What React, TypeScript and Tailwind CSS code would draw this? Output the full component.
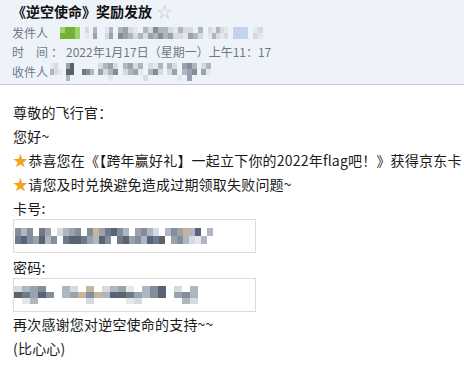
import React from "react";

// mosaic palette used for the blurred (privacy) areas
const PALETTE: Record<string, string> = {
  a: "#56637a",
  b: "#848e9b",
  c: "#adb6c1",
  d: "#c8b59e",
  e: "#6e7a89",
  f: "#d6dbe1",
  g: "#9aa2ac",
  h: "#e4e8ec",
  k: "#5e636b",
  l: "#c3d3ea",
  m: "#74b236",
  n: "#a2d16b",
};

const Mosaic: React.FC<{ rows: string[]; cell: number; rowH: number }> = ({ rows, cell, rowH }) => (
  <div className="flex flex-col">
    {rows.map((row, r) => (
      <div key={r} className="flex">
        {row.split("").map((ch, i) => (
          <span
            key={i}
            style={{ width: cell, height: rowH, background: ch === "." ? "transparent" : PALETTE[ch] }}
          />
        ))}
      </div>
    ))}
  </div>
);

const Star = () => <span className="text-[#f5a21b] text-[15px]">★</span>;

export default function App() {
  return (
    <div
      className="w-[464px] h-[370px] overflow-hidden bg-white text-[#1a1a1a]"
      style={{ fontFamily: '"Noto Sans CJK SC", "Noto Sans", sans-serif' }}
    >
      {/* mail header */}
      <header className="bg-[#eef3fa] border-b border-[#c5cad1] pl-3 h-[85px]">
        <div className="flex items-center h-[22px] whitespace-nowrap">
          <span className="text-[14px] font-bold text-[#111] leading-[20px]">《逆空使命》奖励发放</span>
          <span className="text-[15px] text-[#c4c7cc] ml-[5px] leading-[20px]">☆</span>
        </div>
        <div className="mt-[2px] flex items-center h-[18px] text-[12px] text-[#6e7886] whitespace-nowrap">
          <span className="w-[36px]">发件人</span>
          <div className="ml-[12px] flex items-center gap-[5px] blur-[0.5px]">
            <Mosaic rows={["nmmn", "mmmn"]} cell={5} rowH={6} />
            <Mosaic rows={["f.c..hc", "h.g..fg"]} cell={4} rowH={6} />
            <Mosaic rows={["cgfh.cfbccfhcff.c", "bgcfcfgcbcgffhgcf"]} cell={5} rowH={6} />
            <Mosaic rows={["fhcfh", "hcfhf"]} cell={4} rowH={6} />
            <Mosaic rows={["lll", "lll"]} cell={5} rowH={6} />
            <Mosaic rows={["hf", "fh"]} cell={5} rowH={6} />
          </div>
        </div>
        <div className="flex items-center h-[19px] text-[12px] text-[#6e7886] whitespace-nowrap">
          <span className="w-[36px] flex justify-between">
            <span>时</span>
            <span>间</span>
          </span>
          <span className="ml-[3px]">：</span>
          <span className="ml-[3px]">2022年1月17日（星期一）上午11：17</span>
        </div>
        <div className="flex items-center h-[21px] text-[12px] text-[#6e7886] whitespace-nowrap">
          <span className="w-[36px]">收件人</span>
          <div className="ml-[2px] flex items-start gap-[4px] blur-[0.5px]">
            <Mosaic rows={["hf.", "cfh", "..."]} cell={4} rowH={6} />
            <Mosaic rows={["gk.", "kk.", "c.."]} cell={4} rowH={6} />
            <Mosaic rows={["...", "ebc", "..."]} cell={4} rowH={6} />
            <Mosaic rows={["fcgf.cgfc.fhc", "gfcb.fcgh.cbf", "..h......f..."]} cell={5} rowH={6} />
            <Mosaic rows={["cf.gbc", "fg.cgb", "..h.g."]} cell={5} rowH={6} />
            <Mosaic rows={["fc", "gh"]} cell={5} rowH={6} />
          </div>
        </div>
      </header>

      {/* mail body */}
      <main className="pl-[13px] pt-[15px] text-[14px] tracking-[0.2px] whitespace-nowrap">
        <p className="leading-[24px]">尊敬的飞行官：</p>
        <p className="leading-[24px]">您好~</p>
        <p className="leading-[24px]">
          <Star />
          恭喜您在《【跨年赢好礼】一起立下你的2022年flag吧！》获得京东卡
        </p>
        <p className="leading-[24px]">
          <Star />
          请您及时兑换避免造成过期领取失败问题~
        </p>
        <p className="leading-[22px] mt-[1px]">卡号:</p>
        <div className="w-[243px] h-[34px] border border-[#dcdcdc] flex items-center pl-[1px] blur-[0.4px]">
          <Mosaic
            rows={["bcb.eg.fcgb.bdgeabc.gbcf.cbgdca.c.", "eabgkcb.ekaegckb.ekgbcaek.gbcfhc.."]}
            cell={6}
            rowH={8}
          />
        </div>
        <p className="leading-[22px] mt-[3px]">密码:</p>
        <div className="w-[243px] h-[34px] border border-[#dcdcdc] flex items-center blur-[0.4px]">
          <Mosaic
            rows={["fcgb..cf.d.fcgh.cba.f.c.", "kegab.cgdbdcakegcbk.gbc.", ".hc......f....hf.....cf."]}
            cell={8}
            rowH={6}
          />
        </div>
        <p className="leading-[24px]">再次感谢您对逆空使命的支持~~</p>
        <p className="leading-[24px]">(比心心)</p>
      </main>
    </div>
  );
}
